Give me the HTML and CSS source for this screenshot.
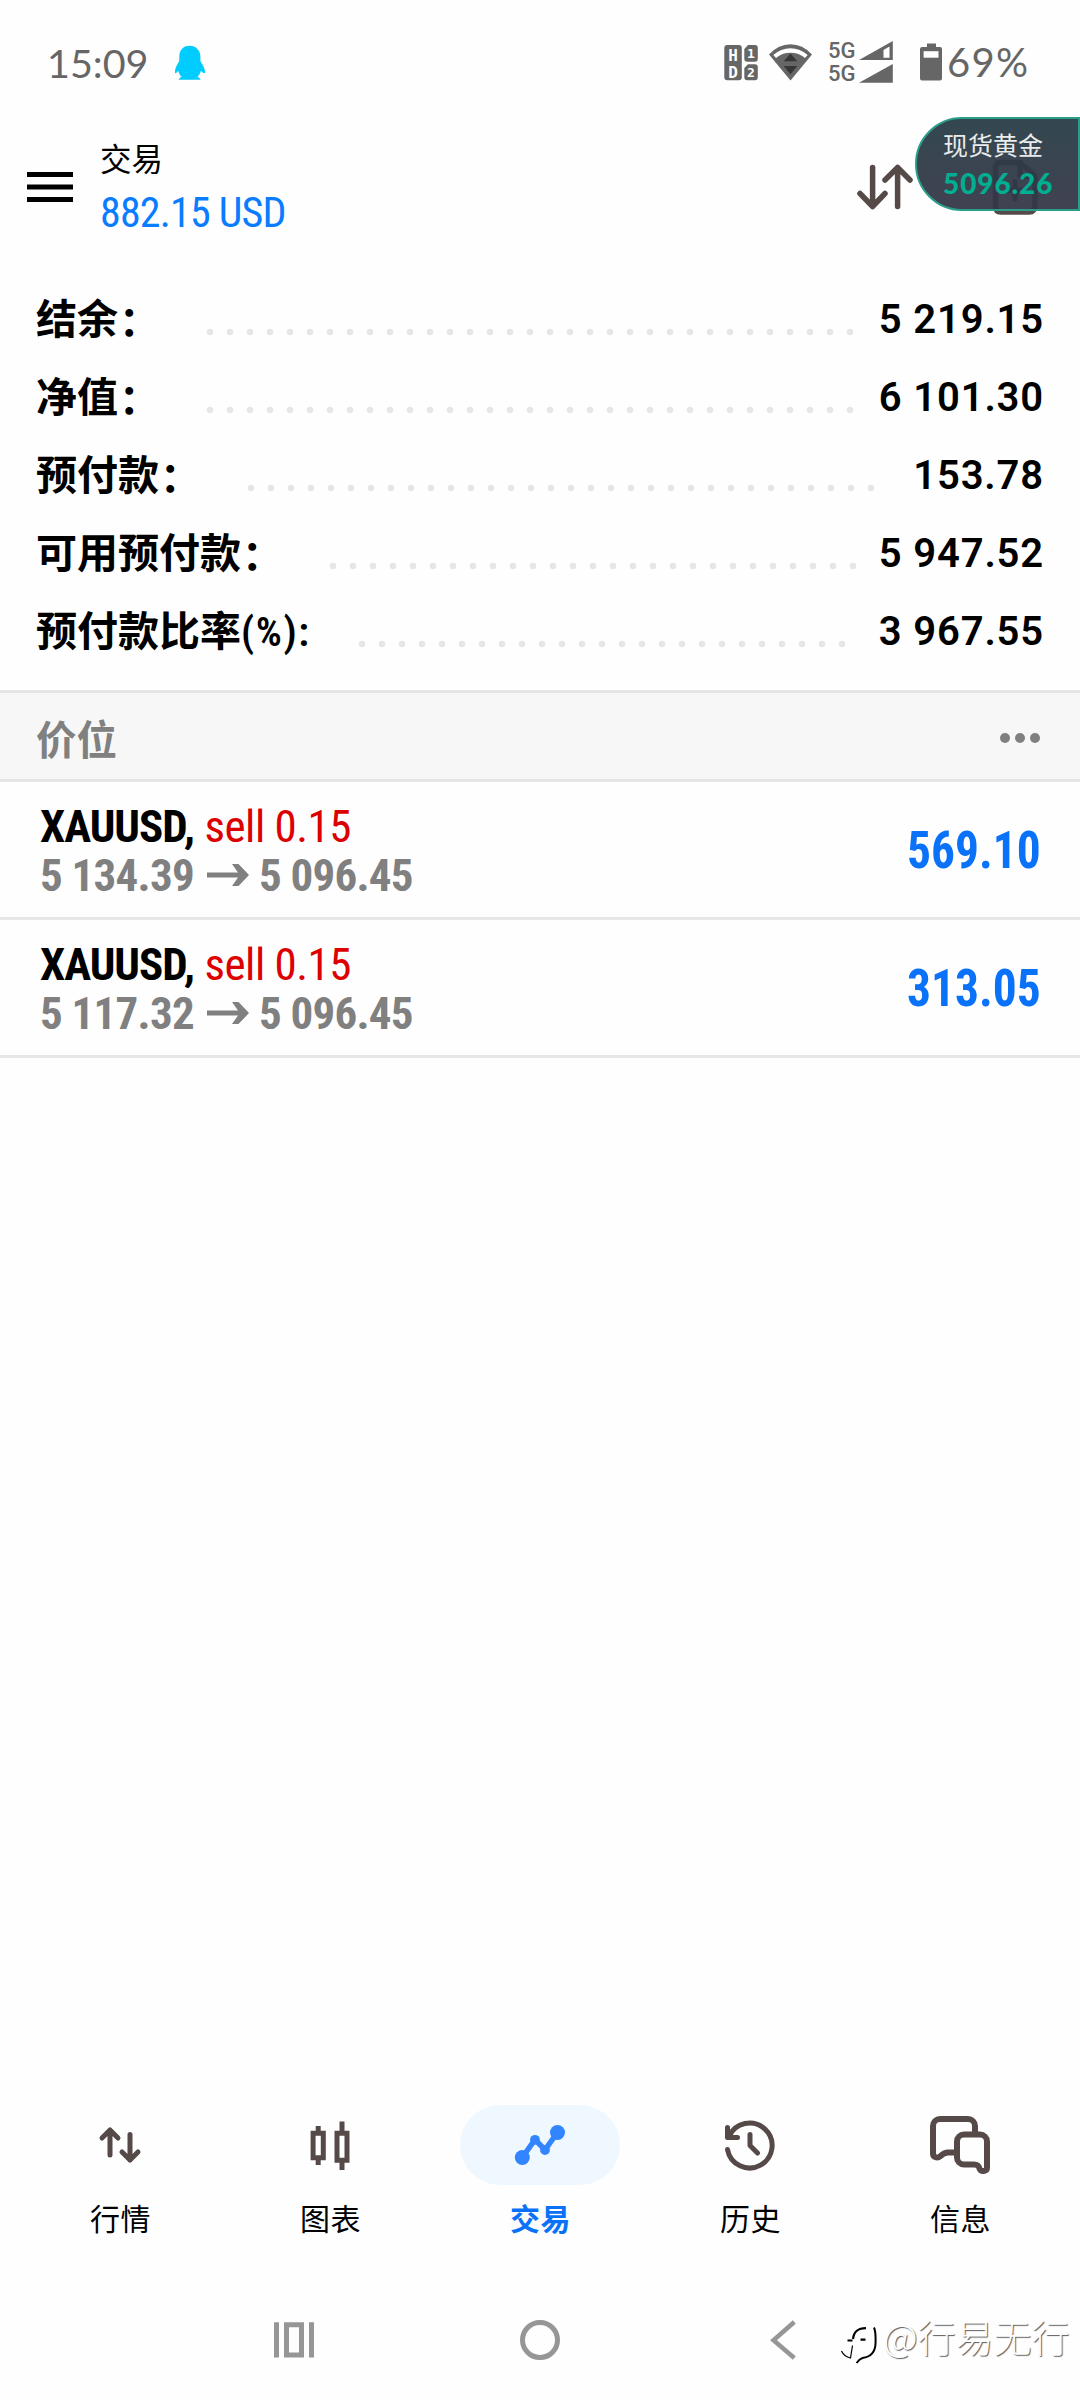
FILE: index.html
```
<!DOCTYPE html>
<html lang="zh-CN">
<head>
<meta charset="utf-8">
<title>交易</title>
<link rel="stylesheet" href="styles.css">
</head>
<body>
<div class="status">
  <span class="clock">15:09</span>
  <svg class="penguin" width="32" height="100" viewBox="174 0 32 100"><path fill="#00ccff" d="M189.500 45.700C183 45.700 179.300 50.500 179.300 56.500V61C177 64.500 174.900 68.500 174.900 72C174.900 74 176.300 73.500 178.200 70.800C178.800 73.500 180.200 75.600 181.700 77C179.600 77.600 178.800 78.600 178.800 79.800H200.500C200.500 78.600 199.500 77.600 197.400 77C199 75.600 200.300 73.500 200.900 70.800C202.900 73.500 205 74 205 72C205 68.500 202.600 64.500 200.400 61V56.500C200.400 50.500 196 45.700 189.500 45.700Z"/></svg>
  <div class="status-right">
    <svg class="hd" width="34" height="100" viewBox="724 0 34 100">
      <rect x="724.300" y="45" width="17.500" height="35.300" rx="3" fill="#666"/>
      <path fill="#666" d="M748 45H755Q757.800 45 757.800 48V58.700Q757.800 61.700 755 61.700H747.200Q744.300 61.700 744.300 58.700V49ZM748 64.300H755Q757.800 64.300 757.800 67.300V77.300Q757.800 80.300 755 80.300H747.200Q744.300 80.300 744.300 77.300V68Z"/>
      <text x="733" y="60.500" class="hd-big">H</text><text x="733" y="77.500" class="hd-big">D</text>
      <text x="751" y="58.300" class="hd-small">1</text><text x="751" y="77.300" class="hd-small">2</text>
    </svg>
    <svg class="wifi" width="44" height="100" viewBox="769 0 44 100">
      <path fill="#666" d="M790.500 80.600L769 54.500Q778.500 44.300 790.500 44.300T812 54.500Z"/>
      <path fill="#fefefe" d="M773.300 55Q781 48.200 790.500 48.200T807.700 55L805 58Q799 52.800 790.500 52.800T776 58Z"/>
      <path fill="#363636" d="M790.500 53.500L797.300 61.300H783.700ZM783.700 66H797.300L790.500 74.300Z"/>
    </svg>
    <div class="sims"><span>5G</span><span>5G</span></div>
    <svg class="signal" width="35" height="100" viewBox="858 0 35 100">
      <path fill="#666" d="M859 60L892.800 41V60ZM859 82.800L892.800 64V82.800Z"/><path fill="#fefefe" d="M883.500 50L889.500 46.500V57.800H883.500Z"/>
    </svg>
    <svg class="battery" width="22" height="100" viewBox="920 0 22 100">
      <path fill="#666" d="M927 43.600H936V47H940Q942 47 942 49V78.500Q942 80.500 940 80.500H922Q920 80.500 920 78.500V49Q920 47 922 47H927Z"/><path fill="#fefefe" d="M923.600 51.200H938.500V57.700H923.600Z"/>
    </svg>
    <span class="percent">69%</span>
  </div>
</div>
<header class="top">
  <svg width="46" height="180" viewBox="27 100 46 180"><path d="M27 172H73V177H27ZM27 184.500H73V189.500H27ZM27 197H73V202H27Z"/></svg>
  <div class="title"><h1>交易</h1><span class="profit">882.15 USD</span></div>
  <svg class="actions" width="182" height="180" viewBox="856 100 182 180" fill="none" stroke="#554a48" stroke-width="5.500" stroke-linecap="round" stroke-linejoin="round">
    <path d="M872.600 167.500V206.500M860 193.500L872.600 206.500L885 193.500M897.600 206.500V167.500M885 180L897.600 167.500L910 180"/>
    <path d="M1001 162.500H1020L1035 176V205Q1035 212 1029 212H1001Q995.500 212 995.500 206V168Q995.500 162.500 1001 162.500ZM1020 162.500V176H1035M1015 182V199M1007 190.500H1023"/>
  </svg>
  <aside class="ticker"><span class="ticker-name">现货黄金</span><span class="ticker-price">5096.26</span></aside>
</header>
<section class="summary">
  <div class="row"><span class="label">结余<i class="colon">：</i></span><svg class="dots" width="660" height="8"><path d="M4 4H660"/></svg><b>5 219.15</b></div>
  <div class="row"><span class="label">净值<i class="colon">：</i></span><svg class="dots" width="660" height="8"><path d="M4 4H660"/></svg><b>6 101.30</b></div>
  <div class="row"><span class="label">预付款<i class="colon">：</i></span><svg class="dots" width="640" height="8"><path d="M4 4H640"/></svg><b>153.78</b></div>
  <div class="row"><span class="label">可用预付款<i class="colon">：</i></span><svg class="dots" width="540" height="8"><path d="M4 4H540"/></svg><b>5 947.52</b></div>
  <div class="row"><span class="label">预付款比率<i class="unit">(%):</i></span><svg class="dots" width="500" height="8"><path d="M4 4H500"/></svg><b>3 967.55</b></div>
</section>
<div class="section-head"><span>价位</span><svg width="40" height="10"><g fill="#808080"><circle cx="5" cy="5" r="5"/><circle cx="20" cy="5" r="5"/><circle cx="35" cy="5" r="5"/></g></svg></div>
<main class="positions">
  <article class="position">
    <div><p><b class="symbol">XAUUSD,</b> <span class="side">sell 0.15</span></p>
    <p class="prices"><span>5 134.39</span><svg width="42" height="24" viewBox="0 0 42 24"><path d="M0 9.500H31L25 1H31.500L42 12L31.500 23H25L31 14.500H0Z"/></svg><span>5 096.45</span></p></div>
    <strong>569.10</strong>
  </article>
  <article class="position">
    <div><p><b class="symbol">XAUUSD,</b> <span class="side">sell 0.15</span></p>
    <p class="prices"><span>5 117.32</span><svg width="42" height="24" viewBox="0 0 42 24"><path d="M0 9.500H31L25 1H31.500L42 12L31.500 23H25L31 14.500H0Z"/></svg><span>5 096.45</span></p></div>
    <strong>313.05</strong>
  </article>
</main>
<nav class="tabs">
  <a class="tab"><svg viewBox="40 2105 160 80"><path class="line" d="M110 2155V2130M102 2138L110 2130L118 2138M130 2134.500V2160M122 2152L130 2160L138 2152"/></svg><span>行情</span></a>
  <a class="tab"><svg viewBox="250 2105 160 80"><path class="box" d="M313.100 2133.300H323.300V2157.800H313.100ZM337 2133.300H347V2160.200H337ZM318.200 2126V2132M318.200 2159V2165M342 2121.500V2132M342 2161V2170"/></svg><span>图表</span></a>
  <a class="tab active"><svg viewBox="460 2105 160 80"><path d="M522.300 2157.500L535 2139.500L545 2149.800L557.500 2132.500" fill="none" stroke="#3385ff" stroke-width="5.500"/><g fill="#3385ff"><circle cx="522.300" cy="2157.500" r="7.500"/><circle cx="535" cy="2139.800" r="4.900"/><circle cx="545" cy="2150" r="4.900"/><circle cx="557.500" cy="2132.500" r="7.500"/></g></svg><span>交易</span></a>
  <a class="tab"><svg viewBox="670 2105 160 80"><path class="line" d="M727.500 2149.500A22.500 22.500 0 1 0 729 2136.500M727.500 2127.500V2137.500H737.500M750 2134.500V2145.500L757.500 2153"/><path fill="#554a48" d="M727.500 2137.500V2130L735 2137.500Z"/></svg><span>历史</span></a>
  <a class="tab"><svg viewBox="880 2105 160 80"><path class="line msg" d="M975 2133V2126A7 7 0 0 0 968 2119H940A7 7 0 0 0 933 2126V2153.500C933 2157.500 937.500 2158.500 940 2156.500C943 2153.500 945 2152.500 948 2152.500H956M964 2134.500H980A7 7 0 0 1 987 2141.500V2168C987 2172 980.500 2172 979.500 2168.500C978.500 2165 977 2164.500 974 2164.500H964A7 7 0 0 1 957 2157.500V2141.500A7 7 0 0 1 964 2134.500Z"/></svg><span>信息</span></a>
</nav>
<footer class="system">
  <svg width="40" height="120" viewBox="274 2280 40 120"><path fill="#969696" d="M274 2322.300H279V2357.500H274ZM309 2322.300H314V2357.500H309Z"/><path fill="none" stroke="#969696" stroke-width="5" d="M286.500 2324.800H301.500V2355H286.500Z"/></svg>
  <svg width="40" height="120" viewBox="520 2280 40 120"><circle cx="540" cy="2340" r="17.500" fill="none" stroke="#969696" stroke-width="5"/></svg>
  <svg width="26" height="120" viewBox="770 2280 26 120"><path fill="none" stroke="#969696" stroke-width="4.500" d="M794.300 2322L773.500 2340.200L794.300 2358"/></svg>
  <div class="watermark">
    <svg width="37" height="120" viewBox="840 2280 37 120" fill="none" stroke="#000"><path stroke-width="2.200" d="M847.500 2340.500H852.500M853 2339C854 2331 858 2328.200 866 2328.200M860.500 2339.700H865.500"/><path stroke-width="1.200" d="M841.500 2351Q844 2356.500 850.500 2358L852.500 2345.500"/><path stroke-width="2" d="M874 2327.500Q876 2332 875.500 2344C875 2353 870 2357 862.500 2358Q859.500 2359 856.500 2363"/></svg>
    <span>@行易无行</span>
  </div>
</footer>
</body>
</html>
```
FILE: styles.css
```
* { box-sizing: border-box; }
body {
  margin: 0; width: 1080px; height: 2400px; overflow: hidden;
  display: flex; flex-direction: column;
  background: #fefefe; color: #000;
  font-family: Roboto, "Noto Sans CJK SC", sans-serif;
}
h1, p { margin: 0; font-weight: 400; }
svg { display: block; flex: none; }

.status { display: flex; height: 100px; padding-left: 47px; color: #666; font-family: Lato, sans-serif; }
.clock { width: 127px; font-size: 39.500px; line-height: 125px; }
.status-right { display: flex; margin-left: auto; padding-right: 49px; }
.wifi { margin-left: 11px; }
.sims { display: flex; flex-direction: column; width: 30px; margin-left: 15px; padding-top: 39px; font: 500 22px/23px Roboto, sans-serif; }
.battery { margin-left: 27px; }
.percent { width: 84px; margin-left: 5px; font-size: 40px; line-height: 125px; letter-spacing: 1.300px; }
.hd text { fill: #fefefe; text-anchor: middle; font-family: "DejaVu Sans Mono", monospace; font-weight: 700; }
.hd-big { font-size: 16px; }
.hd-small { font-size: 13px; }

.top { position: relative; display: flex; height: 180px; padding: 0 42px 0 27px; }
.title { display: flex; flex-direction: column; margin-left: 27px; padding-top: 41px; }
.title h1 { font-size: 31.500px; line-height: 40px; }
.profit { color: #0a7cff; font-size: 42px; line-height: 64px; font-stretch: 75%; letter-spacing: -.800px; }
.actions { margin-left: auto; }
.ticker {
  position: absolute; top: 17px; right: 0; width: 165px; height: 94px;
  display: flex; flex-direction: column; padding: 12px 0 0 26px;
  border: 2px solid #2a9d88; border-radius: 47px 0 0 47px;
  background: linear-gradient(rgba(38, 60, 69, .94), rgba(53, 54, 70, .94));
}
.ticker-name { color: #e9ebec; font-size: 25px; line-height: 31px; }
.ticker-price { color: #00ae91; font: 900 28px/34px Lato, sans-serif; margin-top: 4px; letter-spacing: .900px; }

.summary { padding: 0 36px 20px 36px; }
.row { display: flex; align-items: center; height: 78px; }
.label { padding-top: 2px; font-size: 41px; font-weight: 700; line-height: 76px; margin-right: 47px; }
.label i { font-style: normal; }
.colon { position: relative; left: 1px; top: 2px; }
.unit { font-stretch: 75%; font-weight: 600; letter-spacing: 1.600px; }
.dots { margin-top: 26px; fill: none; stroke: #e6e6e6; stroke-width: 6.500; stroke-linecap: round; stroke-dasharray: 0 20; }
.row b { margin-left: auto; padding-top: 2px; font-size: 40px; font-weight: 600; line-height: 76px; letter-spacing: .850px; }

.section-head {
  display: flex; align-items: center; justify-content: space-between; height: 92px; padding: 2px 40px 0 36px;
  border-top: 3px solid #e6e6e6; border-bottom: 3px solid #e6e6e6; background: #f7f7f7;
  color: #808080; font-size: 40.500px; font-weight: 700;
}
.section-head svg { margin-top: 2px; }
.position {
  display: flex; justify-content: space-between; align-items: center; height: 138px; padding: 2px 39px 0 40px;
  border-bottom: 3px solid #e6e6e6; font-stretch: 75%; font-size: 45px; line-height: 49px; white-space: nowrap;
}
.symbol { font-weight: 700; letter-spacing: -1px; }
.side { color: #dc0000; letter-spacing: -.500px; }
.prices { display: flex; align-items: center; color: #808080; font-weight: 700; letter-spacing: -.750px; }
.prices svg { margin: 0 10px 0 13px; fill: #808080; }
.position strong { color: #0a72f8; font-size: 51px; font-weight: 700; transform: scaleX(.93); transform-origin: right; }

.tabs { display: flex; height: 175px; margin-top: auto; padding: 0 15px; }
.tab { display: flex; flex-direction: column; align-items: center; width: 210px; font-size: 30px; line-height: 70px; letter-spacing: .600px; text-indent: 1px; }
.tab svg { width: 160px; height: 80px; border-radius: 40px; }
.tab.active { color: #0a72f8; font-weight: 700; }
.tab.active svg { background: #f0f8ff; }
.line { fill: none; stroke: #554a48; stroke-width: 5; stroke-linecap: round; stroke-linejoin: round; }
.line.msg { stroke-width: 6; }
.box { fill: none; stroke: #554a48; stroke-width: 5; }

.system { display: flex; height: 120px; padding-left: 274px; }
.system > svg + svg { margin-left: 206px; }
.system > svg + svg + svg { margin-left: 210px; }
.watermark { display: flex; align-items: center; margin-left: 44px; }
.watermark span { margin-left: 6px; padding-bottom: 9px; color: #fff; font: 300 38px/50px "Noto Sans CJK SC", sans-serif; white-space: nowrap; text-shadow: 1px 1px 1px rgba(0, 0, 0, .65); }
```
